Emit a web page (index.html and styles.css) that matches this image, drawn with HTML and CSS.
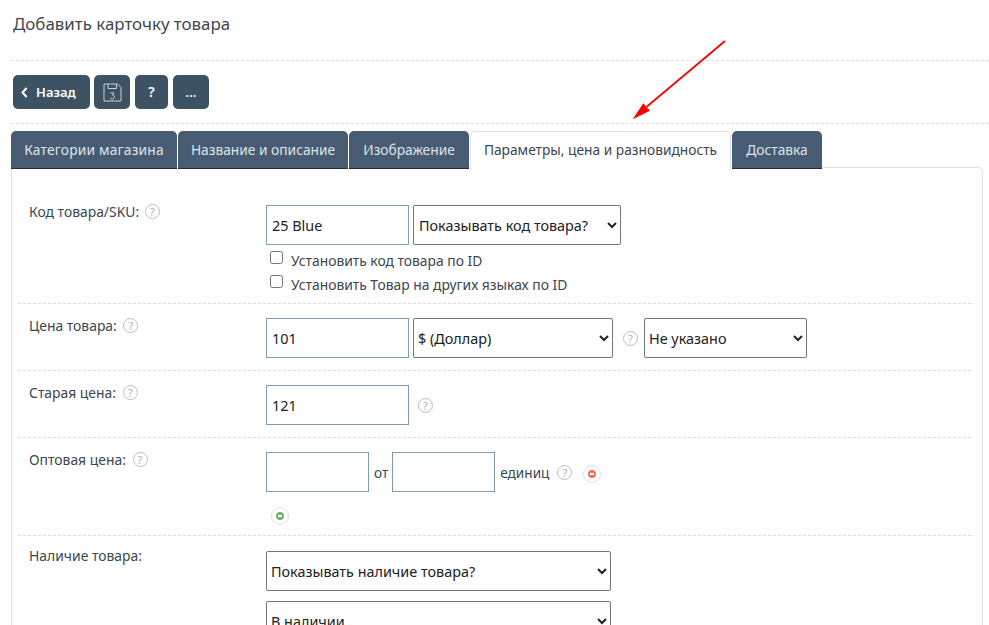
FILE: index.html
```html
<!DOCTYPE html>
<html lang="ru">
<head>
<meta charset="utf-8">
<title>Добавить карточку товара</title>
<link rel="stylesheet" href="styles.css">
</head>
<body>
<h1 class="title">Добавить карточку товара</h1>
<div class="toolbar">
  <button class="btn btn-back"><svg class="chev" width="7" height="11" viewBox="0 0 7 11"><path d="M5.600 1 1.600 5.500l4 4.500" fill="none" stroke="#fff" stroke-width="2"/></svg>Назад</button>
  <button class="btn btn-save"><svg width="19" height="19" viewBox="0 0 19 19" fill="none" stroke="#c9d1d8" stroke-width="1"><path d="M1 1h13.500L18 4.500V18H1z"/><path d="M5 1v4.500h8.500V1"/><path d="M7.500 10h3.500l-1.500 2c1.500 0 2 1 2 2s-1 2-2.200 2-1.800-.6-2-1.300"/></svg></button>
  <button class="btn btn-help">?</button>
  <button class="btn btn-more">...</button>
</div>
<nav class="tabs">
  <a class="tab tab-1">Категории магазина</a>
  <a class="tab tab-2">Название и описание</a>
  <a class="tab tab-3">Изображение</a>
  <a class="tab tab-active">Параметры, цена и разновидность</a>
  <a class="tab tab-5">Доставка</a>
</nav>
<main class="panel">
  <section class="row row-first">
    <div class="label">Код товара/SKU: <span class="help help-first">?</span></div>
    <div class="controls">
      <div class="line">
        <input class="field w143" value="25 Blue">
        <select class="sel w208"><option>Показывать код товара?</option></select>
      </div>
      <label class="check check-first"><input type="checkbox">Установить код товара по ID</label>
      <label class="check"><input type="checkbox">Установить Товар на других языках по ID</label>
    </div>
  </section>
  <section class="row">
    <div class="label">Цена товара: <span class="help help-sp">?</span></div>
    <div class="controls">
      <div class="line">
        <input class="field w143" value="101">
        <select class="sel w200"><option>$ (Доллар)</option></select>
        <span class="help help-inline">?</span>
        <select class="sel w163"><option>Не указано</option></select>
      </div>
    </div>
  </section>
  <section class="row">
    <div class="label">Старая цена: <span class="help help-sp">?</span></div>
    <div class="controls">
      <div class="line">
        <input class="field w143" value="121">
        <span class="help help-after">?</span>
      </div>
    </div>
  </section>
  <section class="row">
    <div class="label">Оптовая цена: <span class="help help-sp">?</span></div>
    <div class="controls">
      <div class="line">
        <input class="field w103">
        <span class="txt txt-from">от</span>
        <input class="field w103">
        <span class="txt">единиц</span>
        <span class="help help-unit">?</span>
        <span class="round round-minus"><i></i></span>
      </div>
      <div class="add"><span class="round round-plus"><i></i></span></div>
    </div>
  </section>
  <section class="row row-last">
    <div class="label">Наличие товара:</div>
    <div class="controls stack">
      <select class="sel w345"><option>Показывать наличие товара?</option></select>
      <select class="sel w345"><option>В наличии</option></select>
    </div>
  </section>
</main>
<svg class="arrow" width="100" height="85" viewBox="0 0 100 85"><path d="M95 1 16.700 66.700" stroke="#f00" stroke-width="1.800" fill="none"/><path d="M2.700 79.300 13.300 63.300 20 70.700z" fill="#f00"/></svg>
</body>
</html>
```
FILE: styles.css
```css
* { box-sizing: border-box; }
html, body { margin: 0; height: 625px; overflow: hidden; }
body {
  background: #fff;
  color: #3c4650;
  font-family: "Noto Sans", "Open Sans", sans-serif;
  font-size: 13.800px;
  position: relative;
  padding: 0 6px 0 11px;
}
.title {
  margin: 0;
  padding: 14px 0 0 2px;
  height: 61px;
  font-size: 16.900px;
  line-height: 20px;
  font-weight: 400;
  color: #3f4850;
  border-bottom: 1px dashed #ddd;
  margin-right: -6px;
}
.toolbar {
  display: flex;
  height: 63px;
  padding: 14px 0 0 2px;
  border-bottom: 1px dashed #ddd;
  margin-right: -6px;
}
.btn {
  height: 34px;
  border: 0;
  border-radius: 5px;
  background: #3d5364;
  color: #fff;
  font: 600 13px/34px "Noto Sans", sans-serif;
  padding: 0;
  display: flex;
  align-items: center;
  justify-content: center;
}
.btn-back { width: 77px; margin-right: 4px; justify-content: flex-start; padding-left: 8px; }
.chev { margin-right: 8px; }
.btn-save { width: 36px; margin-right: 5px; }
.btn-help { width: 33px; margin-right: 5px; font-size: 14px; }
.btn-more { width: 36px; }
.tabs {
  display: flex;
  height: 38px;
  margin-top: 7px;
  position: relative;
  z-index: 1;
  gap: 1px;
}
.tab {
  height: 38px;
  background: #475c72;
  color: #dfe4e8;
  border-radius: 5px 5px 0 0;
  border-bottom: 1px solid #1e2c3c;
  text-align: center;
  line-height: 37px;
  font-size: 13.760px;
  white-space: nowrap;
}
.tab-1 { width: 166px; letter-spacing: .2px; }
.tab-2 { width: 170px; }
.tab-3 { width: 120px; }
.tab-active {
  width: 261px;
  background: #fff;
  color: #3c4650;
  border: 1px solid #e2e2e2;
  border-bottom: 0;
  line-height: 36px;
  height: 39px;
}
.tab-5 { width: 90px; }
.panel {
  margin-top: -2px;
  height: 470px;
  border: 1px solid #e2e2e2;
  border-radius: 0 5px 0 0;
  padding: 0 11px 0 6px;
}
.row {
  display: grid;
  grid-template-columns: 237px 1fr;
  padding: 14px 0 12px 11px;
  border-bottom: 1px dashed #ddd;
}
.row-first { padding-top: 36px; padding-bottom: 7px; }
.row-first .controls { padding-top: 1px; }
.row-last { border-bottom: 0; padding-top: 12px; }
.row-last .controls { padding-top: 3px; }
.label {
  font-size: 13.900px;
  line-height: 16px;
  color: #3c4650;
}
.help {
  display: inline-flex;
  align-items: center;
  justify-content: center;
  width: 15px;
  height: 15px;
  border: 1px solid #bdbdbd;
  border-radius: 50%;
  color: #b0b0b0;
  font-size: 11px;
  line-height: 1;
  vertical-align: 1px;
}
.help-first { margin-left: 2px; }
.help-sp { margin-left: 3px; }
.help-inline { margin: 0 6px 0 10px; }
.help-after { margin-left: 9px; }
.help-unit { margin-left: 3px; }
.line { display: flex; align-items: center; }
.field {
  height: 40px;
  border: 1px solid #7c9cb8;
  border-radius: 0;
  padding: 0 5px;
  font: 14.400px "Noto Sans", sans-serif;
  color: #222;
  outline: 0;
  background: #fff;
}
.sel {
  height: 40px;
  margin: 0;
  padding: 0;
  border: 1px solid #767676;
  border-radius: 2px;
  background: #fff;
  font: 14.400px "Noto Sans", sans-serif;
  color: #222;
}
.w103 { width: 103px; }
.w143 { width: 143px; }
.w163 { width: 163px; }
.w200 { width: 200px; margin-left: 4px; }
.w208 { width: 208px; margin-left: 4px; padding-left: 1px; }
.w345 { width: 345px; display: block; }
.stack { display: flex; flex-direction: column; gap: 10px; }
.txt { padding: 0 5px; font-size: 13.600px; }
.txt-from { padding: 0 4px 0 5px; }
.check {
  display: flex;
  align-items: center;
  height: 24px;
  font-size: 13.850px;
  color: #3c4650;
}
.check-first { margin-top: 3px; }
.check input {
  width: 13px;
  height: 13px;
  margin: 0 8px 6px 4px;
}
.round {
  display: inline-flex;
  align-items: center;
  justify-content: center;
  width: 18px;
  height: 18px;
  border: 1px solid #e3e3e3;
  border-radius: 50%;
  background: #fff;
}
.round i {
  display: block;
  position: relative;
  width: 8px;
  height: 8px;
  border-radius: 50%;
}
.round i::after {
  content: "";
  position: absolute;
  left: 2px;
  top: 3px;
  width: 4px;
  height: 2px;
  background: #fff;
}
.round-minus { margin-left: 11px; margin-top: 4px; }
.round-minus i { background: #f0705c; }
.round-plus i { background: #6fb568; }
.add { padding: 13px 0 0 5px; height: 31px; }
.arrow { position: absolute; left: 630px; top: 40px; }
```
